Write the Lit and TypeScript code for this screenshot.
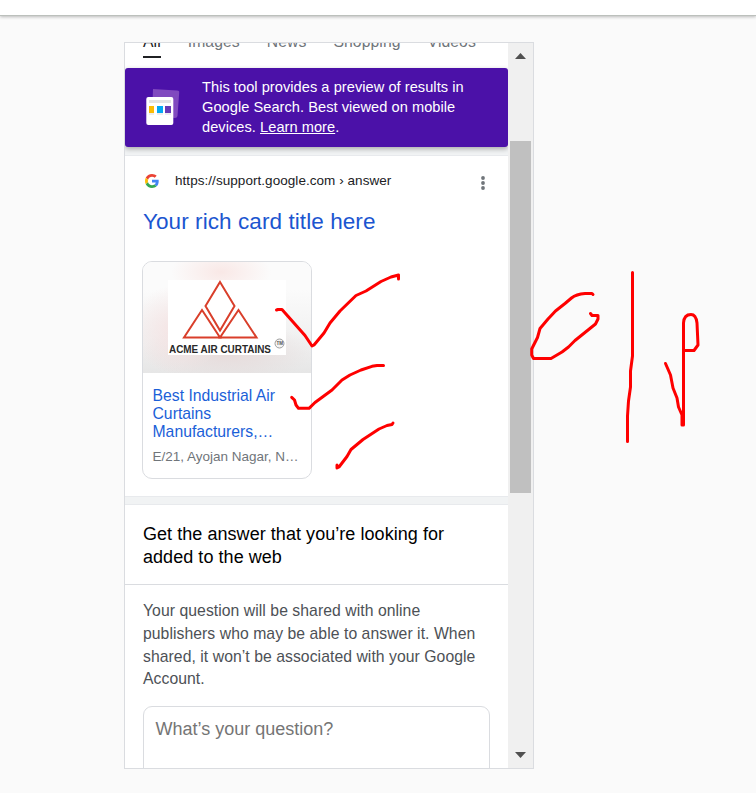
import { LitElement, html, css, svg } from "lit";
import { customElement } from "lit/decorators.js";

const TABS = ["All", "Images", "News", "Shopping", "Videos"];

const STROKES = [
  "M276.500 310L278 309.500H282L305 335.5L312 346L314 345L324 333L330 323L340 311L356 295.5L366 291L381 281.5L391 277L398.500 275V279",
  "M291.700 397.300L294.500 400L296 405L298.500 408.300H309L315 402.500L332 390L342 380L350 375L361 370L372 366.300L377 365.500H383.500",
  "M337 465V468L339 467L347 456.500L351 449.500L363 439.500L379 429L387 425.500L392 424.500L393 423",
  "M593 294.500L592 293.500H585C579 294 574 296 571.500 298L565 303.500L555.500 311L548 319L540 328.500L537.500 337.500L531.700 349V355L533.500 358.500H551L562 352L568.500 347L575 340.500L595.500 324L598 319V315.500H592L590.500 313.500",
  "M632.500 272.500V356L630.500 371V387L628.500 401L627.500 416V441.500",
  "M665.500 363.500L670.500 375L673 388L677 398L678.500 407L682 415V425H683.500V323Q684 314.500 691 314.500Q696 314.500 697 323L698 345L694 350.500H684.500",
];

@customElement("app-root")
export class AppRoot extends LitElement {
  static styles = css`
    :host {
      display: block;
      position: relative;
      width: 756px;
      height: 793px;
      overflow: hidden;
      background: #fafafa;
      font-family: "Liberation Sans", Arial, sans-serif;
      color: #202124;
    }
    * { box-sizing: border-box; }
    svg { display: block; flex: none; }
    .line { display: block; white-space: nowrap; }
    .topbar {
      height: 16px;
      background: #fff;
      border-bottom: 1px solid #bcc0bc;
      box-shadow: 0 1px 3px rgba(0, 0, 0, 0.25);
    }
    .frame {
      display: flex;
      width: 410px;
      height: 727px;
      margin: 26px 0 0 124px;
      border: 1px solid #dadce0;
      background: #fff;
      overflow: hidden;
    }
    .content { width: 383px; height: 725px; overflow: hidden; }
    .tabs {
      display: flex;
      height: 25px;
      padding-left: 18px;
      gap: 27px;
      color: #70757a;
      font-size: 15.75px;
      line-height: 18px;
      letter-spacing: 0.07px;
      overflow: hidden;
    }
    .tab { height: 25px; }
    .tab span { display: block; margin-top: -10px; }
    .tab.active { height: 15px; border-bottom: 2px solid #202124; color: #202124; }
    .banner {
      display: flex;
      position: relative;
      height: 79px;
      padding: 9px 0 0 20px;
      gap: 21px;
      background: #4b11a8;
      border-radius: 3px;
      color: #fff;
      font-size: 14.6px;
      letter-spacing: 0.05px;
      line-height: 20px;
      box-shadow: 0 2px 5px rgba(0, 0, 0, 0.3);
    }
    .banner svg { margin: 10px 0 0; }
    .banner u { text-underline-offset: 1px; }
    .gap { height: 9px; background: #f1f3f4; border-bottom: 1px solid #e8eaed; }
    .result { height: 340px; padding: 15px 17px 0; }
    .source { display: flex; align-items: center; height: 18px; font-size: 13.5px; letter-spacing: 0.05px; }
    .source .url { margin-left: 16px; white-space: nowrap; }
    .source .g { margin: 2px 0 0 3px; }
    .source .more { margin: 6px 5px 0 auto; }
    .title {
      margin: 19px 0 0 1px;
      font-size: 22.5px;
      line-height: 28px;
      letter-spacing: 0.08px;
      color: #1b55d0;
      white-space: nowrap;
    }
    .card {
      width: 170px;
      height: 218px;
      margin-top: 25px;
      border: 1px solid #dadce0;
      border-radius: 10px;
      overflow: hidden;
    }
    .photo {
      display: flex;
      height: 111px;
      padding: 18px 0 0 25px;
      background:
        radial-gradient(ellipse 50px 26px at 78px 10px, #f9e8e6, #f9e8e600),
        radial-gradient(ellipse 46px 45px at 34px 68px, #f5e3e3, #f5e3e300),
        radial-gradient(ellipse 85px 30px at 85px 90px, #e6dada, #e6dada00),
        linear-gradient(#fbfbfb 25%, #efefef 75%, #e6e6e6);
    }
    .name {
      margin: 14px 0 0 9.500px;
      font-size: 15.75px;
      line-height: 18px;
      color: #1b5fd8;
    }
    .address { margin: 7px 0 0 9.500px; font-size: 13.5px; line-height: 18px; color: #70757a; white-space: nowrap; }
    .divider { height: 9px; background: #f1f3f4; border-top: 1px solid #e8eaed; border-bottom: 1px solid #e8eaed; }
    .ask { height: 80px; padding: 18px 18px 0; border-bottom: 1px solid #dadce0; font-size: 18px; line-height: 23px; letter-spacing: 0.05px; color: #000; }
    .note { padding: 15px 18px 0; font-size: 15.75px; line-height: 22.750px; letter-spacing: 0.05px; color: #4d5156; }
    .field {
      height: 90px;
      margin: 15px 18px 0;
      padding: 12px 11.500px;
      border: 1px solid #dadce0;
      border-radius: 9px;
      font-size: 18px;
      line-height: 21px;
      color: #757575;
    }
    .scroll {
      display: flex;
      flex-direction: column;
      align-items: center;
      width: 25px;
      padding-top: 10px;
      background: #f0f0f0;
    }
    .thumb { width: 21px; height: 352px; margin: 82px 1px 259px 0; background: #c0c0c0; }
    .ink {
      position: absolute;
      left: 0;
      top: 0;
      fill: none;
      stroke: #fe0000;
      stroke-width: 3;
      stroke-linecap: round;
      stroke-linejoin: round;
    }
  `;

  private tabIcon() {
    return html`<svg width="36" height="38" viewBox="0 0 36 38">
      <path d="M8 2L32 3.500Q34.500 3.500 34.200 5.500L32.500 29Q32 31 30 31L7 29Z" fill="#804abf" />
      <rect x="1.300" y="10" width="27" height="28" rx="2" fill="#fff" />
      <path d="M4 13H26V16H4z" fill="#e4e4e4" />
      <path d="M4 19H9V26H4z" fill="#fbbc04" />
      <path d="M12 19H18V26H12z" fill="#03a9f4" />
      <path d="M20 19H26V26H20z" fill="#673ab7" />
      <path d="M4 26H9V28H4zM12 26H18V28H12zM20 26H26V28H20z" fill="#eee" />
    </svg>`;
  }

  private googleIcon() {
    return html`<svg class="g" width="14" height="14" viewBox="0 0 48 48">
      <path fill="#EA4335" d="M24 9.500c3.540 0 6.710 1.220 9.210 3.600l6.850-6.850C35.900 2.380 30.470 0 24 0 14.620 0 6.510 5.380 2.560 13.220l7.980 6.190C12.430 13.720 17.740 9.500 24 9.500z" />
      <path fill="#4285F4" d="M46.980 24.550c0-1.570-.15-3.090-.38-4.550H24v9.020h12.940c-.58 2.960-2.260 5.480-4.780 7.180l7.730 6c4.510-4.180 7.090-10.360 7.090-17.650z" />
      <path fill="#FBBC05" d="M10.530 28.590c-.48-1.450-.76-2.990-.76-4.590s.27-3.140.76-4.590l-7.980-6.190C.92 16.460 0 20.120 0 24c0 3.880.92 7.540 2.560 10.780l7.970-6.190z" />
      <path fill="#34A853" d="M24 48c6.480 0 11.930-2.130 15.890-5.810l-7.730-6c-2.150 1.450-4.920 2.300-8.160 2.300-6.260 0-11.570-4.220-13.470-9.910l-7.980 6.190C6.510 42.620 14.620 48 24 48z" />
    </svg>`;
  }

  private acmeLogo() {
    return html`<svg width="118" height="75" viewBox="0 0 118 75">
      <rect width="118" height="75" fill="#fff" />
      <g fill="none" stroke="#d93f2b" stroke-width="2">
        <path d="M52 2L66.500 26L52 50.500L37.500 26Z" />
        <path d="M34 30L16 57.500H52Z" />
        <path d="M70.500 30L52 57.500H88.500Z" />
      </g>
      <text x="1" y="72.500" textLength="102" lengthAdjust="spacingAndGlyphs" font-size="10" font-weight="700" fill="#292929">ACME AIR CURTAINS</text>
      <circle cx="111.500" cy="63.500" r="4.500" fill="#f4f4f4" stroke="#888" stroke-width="0.800" />
      <text x="108.500" y="65.300" font-size="4.500" font-weight="700" fill="#555">TM</text>
    </svg>`;
  }

  render() {
    return html`
      <div class="topbar"></div>
      <div class="frame">
        <div class="content">
          <div class="tabs">
            ${TABS.map((t, i) => html`<div class="tab ${i === 0 ? "active" : ""}"><span>${t}</span></div>`)}
          </div>
          <div class="banner">
            ${this.tabIcon()}
            <div>
              <span class="line">This tool provides a preview of results in</span>
              <span class="line">Google Search. Best viewed on mobile</span>
              <span class="line">devices. <u>Learn more</u>.</span>
            </div>
          </div>
          <div class="gap"></div>
          <div class="result">
            <div class="source">
              ${this.googleIcon()}
              <span class="url">https://support.google.com › answer</span>
              <svg class="more" width="6" height="14" viewBox="0 0 6 14" fill="#70757a">
                <circle cx="3" cy="2" r="1.900" /><circle cx="3" cy="7" r="1.900" /><circle cx="3" cy="12" r="1.900" />
              </svg>
            </div>
            <div class="title">Your rich card title here</div>
            <div class="card">
              <div class="photo">${this.acmeLogo()}</div>
              <div class="name">
                <span class="line">Best Industrial Air</span>
                <span class="line">Curtains</span>
                <span class="line">Manufacturers,…</span>
              </div>
              <div class="address">E/21, Ayojan Nagar, N…</div>
            </div>
          </div>
          <div class="divider"></div>
          <div class="ask">
            <span class="line">Get the answer that you’re looking for</span>
            <span class="line">added to the web</span>
          </div>
          <div class="note">
            <span class="line">Your question will be shared with online</span>
            <span class="line">publishers who may be able to answer it. When</span>
            <span class="line">shared, it won’t be associated with your Google</span>
            <span class="line">Account.</span>
          </div>
          <div class="field">What’s your question?</div>
        </div>
        <div class="scroll">
          <svg width="11" height="6" viewBox="0 0 11 6"><path d="M0 6L5.500 0L11 6z" fill="#505050" /></svg>
          <div class="thumb"></div>
          <svg width="11" height="6" viewBox="0 0 11 6"><path d="M0 0H11L5.500 6z" fill="#505050" /></svg>
        </div>
      </div>
      <svg class="ink" width="756" height="793" viewBox="0 0 756 793">
        ${STROKES.map((d) => svg`<path d=${d} />`)}
      </svg>
    `;
  }
}
